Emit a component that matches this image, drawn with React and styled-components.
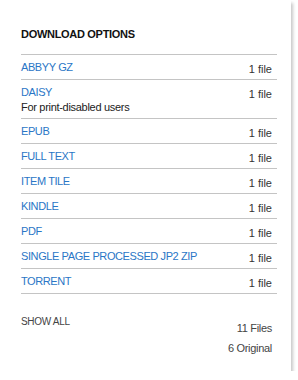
import styled, { createGlobalStyle } from 'styled-components';

const Global = createGlobalStyle`
  body {
    margin: 0;
    background: #fff;
    font-family: "Liberation Sans", Arial, sans-serif;
    letter-spacing: -0.3px;
  }
`

const Card = styled.div`
  width: 291px;
  height: 371px;
  box-sizing: border-box;
  padding: 26px 14px 0 21px;
  background: #fff;
  box-shadow: 2px 3px 3px rgba(0, 0, 0, 0.22);
`

const Heading = styled.h2`
  margin: 0 0 12px;
  font-size: 11px;
  line-height: 16px;
  font-weight: bold;
  color: #111;
`

const List = styled.ul`
  list-style: none;
  margin: 0;
  padding: 0;
  border-top: 1px solid #c4c4c4;
`

const Row = styled.li`
  display: flex;
  justify-content: space-between;
  align-items: flex-start;
  padding: 4px 5px 4px 0;
  border-bottom: 1px solid #c4c4c4;
`

const Name = styled.a`
  display: block;
  font-size: 11px;
  line-height: 16px;
  letter-spacing: -0.4px;
  color: #2a76c6;
  text-decoration: none;
`

const Note = styled.div`
  font-size: 11px;
  line-height: 14px;
  color: #222;
`

const Count = styled.span`
  font-size: 11px;
  line-height: 12px;
  padding-top: 4px;
  letter-spacing: 0;
  color: #333;
`

const Footer = styled.div`
  display: flex;
  justify-content: space-between;
  padding: 21px 5px 0 0;
`

const ShowAll = styled.a`
  font-size: 10px;
  line-height: 14px;
  color: #444;
  text-decoration: none;
`

const Totals = styled.div`
  display: flex;
  flex-direction: column;
  align-items: flex-end;
  gap: 4px;
  padding-top: 5px;
  font-size: 11px;
  line-height: 16px;
  color: #444;
`

const formats = [
  { name: 'ABBYY GZ' },
  { name: 'DAISY', note: 'For print-disabled users' },
  { name: 'EPUB' },
  { name: 'FULL TEXT' },
  { name: 'ITEM TILE' },
  { name: 'KINDLE' },
  { name: 'PDF' },
  { name: 'SINGLE PAGE PROCESSED JP2 ZIP' },
  { name: 'TORRENT' },
]

export default function App() {
  return (
    <>
      <Global />
      <Card>
        <Heading>DOWNLOAD OPTIONS</Heading>
        <List>
          {formats.map((f) => (
            <Row key={f.name}>
              <div>
                <Name href="#">{f.name}</Name>
                {f.note && <Note>{f.note}</Note>}
              </div>
              <Count>1 file</Count>
            </Row>
          ))}
        </List>
        <Footer>
          <ShowAll href="#">SHOW ALL</ShowAll>
          <Totals>
            <span>11 Files</span>
            <span>6 Original</span>
          </Totals>
        </Footer>
      </Card>
    </>
  );
}
